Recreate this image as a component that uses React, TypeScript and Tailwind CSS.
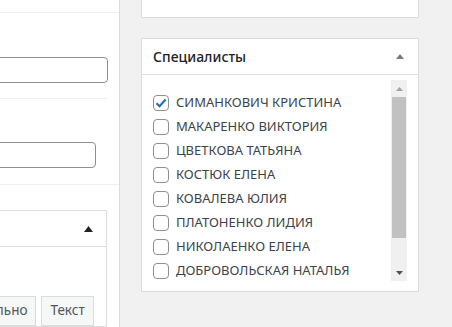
import { useState } from "react"

const doctors = [
  "СИМАНКОВИЧ КРИСТИНА",
  "МАКАРЕНКО ВИКТОРИЯ",
  "ЦВЕТКОВА ТАТЬЯНА",
  "КОСТЮК ЕЛЕНА",
  "КОВАЛЕВА ЮЛИЯ",
  "ПЛАТОНЕНКО ЛИДИЯ",
  "НИКОЛАЕНКО ЕЛЕНА",
  "ДОБРОВОЛЬСКАЯ НАТАЛЬЯ",
  "ИВАНОВА ОЛЬГА",
]

function Checkbox({ checked, onChange }: { checked: boolean; onChange: () => void }) {
  return (
    <button
      type="button"
      onClick={onChange}
      className="w-[16px] h-[16px] shrink-0 rounded-[4px] border border-[#8c8f94] bg-white flex items-center justify-center"
    >
      {checked && (
        <svg width="14" height="14" viewBox="0 0 14 14">
          <path d="M2.5 7.2 L5.6 10.2 L11.6 3.4" fill="none" stroke="#2271b1" strokeWidth="2.2" />
        </svg>
      )}
    </button>
  )
}

export default function App() {
  const [checked, setChecked] = useState<string[]>(["СИМАНКОВИЧ КРИСТИНА"])

  const toggle = (name: string) =>
    setChecked((c) => (c.includes(name) ? c.filter((n) => n !== name) : [...c, name]))

  return (
    <div
      className="flex w-[452px] h-[327px] overflow-hidden bg-[#f1f1f1] text-[#2c3338]"
      style={{ fontFamily: '"Noto Sans", "Open Sans", sans-serif' }}
    >
      {/* left editor column */}
      <div className="w-[120px] shrink-0 bg-white border-r border-[#dcdcde] flex flex-col overflow-hidden">
        <div className="mt-[12px] h-px bg-[#f0f0f1]" />
        <div className="mt-[44px] -ml-[10px] w-[118px] h-[29px] rounded-[4px] border border-[#8c8f94]" />
        <div className="mt-[15px] w-[107px] h-px bg-[#f0f0f1]" />
        <div className="mt-[44px] -ml-[10px] w-[106px] h-[29px] rounded-[4px] border border-[#8c8f94]" />
        <div className="mt-[16px] h-px bg-[#f0f0f1]" />
        <div className="mt-[25px] -ml-[10px] w-[117px] shrink-0 border border-[#dcdcde]">
          <div className="h-[36px] border-b border-[#dcdcde] flex items-center justify-end pr-[13px]">
            <svg width="9" height="6" viewBox="0 0 9 6">
              <path d="M4.5 0 L9 6 L0 6 Z" fill="#1d2327" />
            </svg>
          </div>
          <div className="pt-[49px] flex gap-[5px]">
            <div className="h-[30px] shrink-0 px-[8px] border border-[#dcdcde] bg-[#f6f7f7] text-[13.5px] text-[#50575e] leading-[26px] -ml-[42px]">
              Визуально
            </div>
            <div className="h-[30px] shrink-0 px-[8px] border border-[#dcdcde] bg-[#f6f7f7] text-[13.5px] text-[#50575e] leading-[26px]">
              Текст
            </div>
          </div>
        </div>
      </div>

      {/* sidebar */}
      <div className="pl-[21px] flex flex-col">
        <div className="w-[278px] h-[18px] bg-white border border-t-0 border-[#dcdcde]" />
        <div className="mt-[20px] w-[278px] bg-white border border-[#dcdcde]">
          <div className="h-[36px] border-b border-[#dcdcde] flex items-center justify-between pl-[11px] pr-[14px]">
            <span className="text-[14px] font-medium text-[#1d2327]">Специалисты</span>
            <svg width="8" height="5" viewBox="0 0 8 5">
              <path d="M4 0 L8 5 L0 5 Z" fill="#787c82" />
            </svg>
          </div>
          <div className="pt-[5px] pb-[10px] pl-[11px] pr-[11px] flex">
            <div className="flex-1 h-[201px] overflow-hidden pt-[11px]">
              {doctors.map((d) => (
                <label key={d} className="h-[24px] flex items-center gap-[7px] cursor-pointer">
                  <Checkbox checked={checked.includes(d)} onChange={() => toggle(d)} />
                  <span className="text-[13px] text-[#3c434a] whitespace-nowrap">{d}</span>
                </label>
              ))}
            </div>
            <div className="w-[16px] h-[201px] bg-[#f0f0f0] flex flex-col items-center">
              <div className="h-[17px] flex items-center justify-center">
                <svg width="7" height="4" viewBox="0 0 7 4">
                  <path d="M3.5 0 L7 4 L0 4 Z" fill="#a3a3a3" />
                </svg>
              </div>
              <div className="w-[14px] h-[141px] bg-[#c1c1c1]" />
              <div className="flex-1" />
              <div className="h-[17px] flex items-center justify-center">
                <svg width="7" height="4" viewBox="0 0 7 4">
                  <path d="M0 0 L7 0 L3.5 4 Z" fill="#505050" />
                </svg>
              </div>
            </div>
          </div>
        </div>
      </div>
    </div>
  )
}
